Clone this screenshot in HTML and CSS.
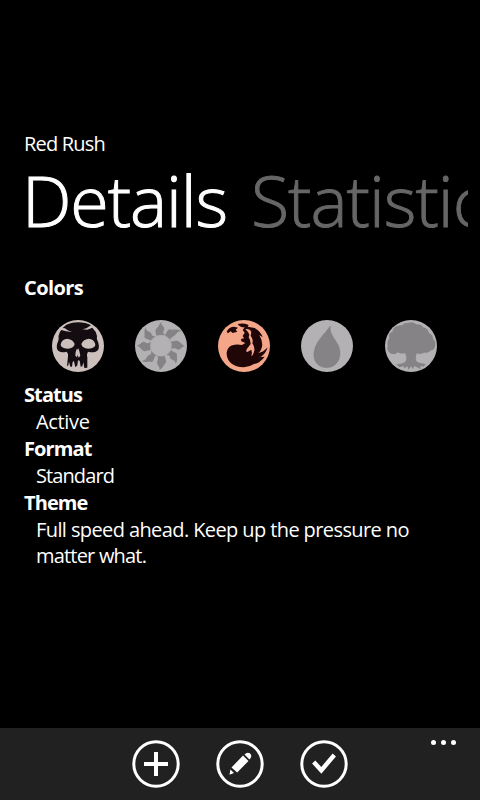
FILE: index.html
```
<!DOCTYPE html>
<html lang="en">
<head>
<meta charset="utf-8">
<title>Red Rush</title>
<link rel="stylesheet" href="styles.css">
</head>
<body>
<div class="phone">
  <header class="header">
    <div class="deck"><span class="t-deck">Red Rush</span></div>
    <nav class="pivot"><span class="tab active">Details</span><span class="tab next">Statistics</span></nav>
  </header>
  <main class="details">
    <div class="label"><span class="t-colors">Colors</span></div>
    <div class="mana">
      <svg viewBox="0 0 192 192"><circle cx="96" cy="96" r="78" fill="#ccc0bd"/>
        <path fill="#130c10" d="M61 32Q78 25 96 25Q120 25 135 34L121 43L109 46L124 47L139 41Q150 51 153 66Q150 76 157 86Q163 108 149 113Q138 116 127 113Q121 119 124 130L124 161L115 162L112 145L109 157L104 158L101 140L96 139L94 154L88 160L84 142L80 143L78 158L73 158L69 143L67 154L63 157L66 127Q67 116 61 113Q48 117 39 112Q30 108 33 91Q37 82 38 75Q36 65 42 53L46 48L60 52L78 54L65 49L57 43L50 42Z"/>
        <path fill="#ccc0bd" d="M44 91Q48 75 64 74Q82 77 86 90Q84 103 65 104Q43 103 44 91ZM148 91Q144 75 128 74Q110 77 106 90Q108 103 127 104Q149 103 148 91Z"/>
        <path fill="#ccc0bd" d="M93 103Q88 113 88 125L93 130L95 122L98 131L103 125Q101 111 97 103L95 108Z"/></svg>
      <svg viewBox="0 0 192 192"><circle cx="96" cy="96" r="78" fill="#b3b1b3"/>
        <g fill="#858385"><path d="M82 65C80 54 77 49 83 43C91 37 89 29 98 24C95 35 105 36 106 44C106 52 98 51 107 62Z"/>
        <path d="M107 63C116 56 113 47 123 46C132 49 138 43 160 51C143 51 143 61 135 66C128 71 125 70 123 79Z"/>
        <path d="M126 82C137 84 140 76 147 81C158 87 160 93 168 97C157 98 157 106 149 107C141 107 143 99 127 105Z"/>
        <path d="M126 108C134 117 143 114 144 122C142 131 148 137 140 149C139 139 132 139 126 135C119 128 128 125 112 123Z"/>
        <path d="M108 125C107 136 115 140 110 147C103 152 101 165 91 168C94 158 84 153 84 146C84 139 91 138 84 124Z"/>
        <path d="M81 124C73 133 76 142 68 144C60 141 53 147 38 141C53 138 51 131 56 126C62 119 67 126 67 110Z"/>
        <path d="M64 109C53 107 50 115 43 110C34 104 34 99 22 93C34 94 36 84 44 83C52 84 49 92 65 84Z"/>
        <path d="M64 80C57 73 48 76 46 68C49 59 43 53 50 40C51 54 60 51 66 57C71 63 64 66 79 66Z"/></g>
        <circle cx="96" cy="95" r="32" fill="#b3b1b3" stroke="#9a989a" stroke-width="1"/></svg>
      <svg viewBox="0 0 192 192"><circle cx="96" cy="96" r="78" fill="#f5a688"/>
        <path fill="#210607" d="M44 53Q51 38 67 38L78 41L71 47L76 53L62 57L56 52L48 58Z"/>
        <path fill="#210607" d="M77 30Q94 26 110 33L107 38L128 42Q147 53 152 70L142 63Q153 82 150 99Q147 111 139 117Q154 115 167 100Q162 118 147 128L136 130L158 128Q145 146 126 150Q112 159 96 160Q68 160 54 145Q43 132 44 115Q47 94 68 92Q81 91 90 93L100 87L88 82L87 75L96 73L92 66L98 56L92 48L98 40Q85 41 77 30Z"/>
        <path fill="#f5a688" d="M100 45Q114 43 118 54L116 66Q125 77 121 88Q130 101 126 113Q124 123 118 126Q121 114 118 107L106 114Q100 112 105 104L116 90L114 78L110 70L112 62L108 54Z"/></svg>
      <svg viewBox="0 0 192 192"><circle cx="96" cy="96" r="78" fill="#b3b1b3"/>
        <path fill="#858385" stroke="#777577" stroke-width="1" d="M106 36C102 57 121 77 129 92C144 122 131 160 95 161C66 161 51 136 58 109C64 80 90 59 106 36Z"/></svg>
      <svg viewBox="0 0 192 192"><circle cx="96" cy="96" r="78" fill="#b3b1b3"/>
        <path fill="#858385" stroke="#777577" stroke-width="1" d="M69 35Q76 25 87 28Q100 22 113 32Q126 30 134 41Q147 43 149 57Q161 62 161 74Q170 80 168 95Q166 107 155 109Q148 118 137 115Q124 122 113 117Q108 126 110 139Q113 146 124 148L139 151L134 157L122 156L125 164L112 158L105 155L102 164L96 155L89 166L86 156L76 162L74 155L62 159L53 152L68 149Q82 146 83 134Q83 121 76 116Q64 121 57 114Q46 124 34 117Q22 109 27 96Q23 83 32 73Q27 57 41 54Q43 37 58 37Q64 32 69 35Z"/></svg>
    </div>
    <div class="label"><span class="t-status">Status</span></div>
    <div class="value"><span class="t-active">Active</span></div>
    <div class="label"><span class="t-format">Format</span></div>
    <div class="value"><span class="t-standard">Standard</span></div>
    <div class="label"><span class="t-theme">Theme</span></div>
    <div class="value theme"><span class="t-line1">Full speed ahead. Keep up the pressure no</span><br><span class="t-line2">matter what.</span></div>
  </main>
  <footer class="appbar">
    <svg viewBox="0 0 48 48"><circle class="ring" cx="24" cy="24" r="22.2"/><path fill="#fff" d="M22 12h4v10h10v4H26v10h-4V26H12v-4h10z"/></svg>
    <svg viewBox="0 0 48 48"><circle class="ring" cx="24" cy="24" r="22.2"/><path fill="#fff" d="M27 15.5L32.5 21L21.2 32.5L15.5 27.5ZM28.5 14.5Q31 12 33.8 13.3Q36.5 15.5 34.3 18.5L33.4 19.5ZM14.4 29.5L18 33L13.5 34.8Z"/></svg>
    <svg viewBox="0 0 48 48"><circle class="ring" cx="24" cy="24" r="22.2"/><path fill="none" stroke="#fff" stroke-width="4.4" d="M13.7 22L21.3 30.3L34.3 15"/></svg>
    <div class="more"><i></i><i></i><i></i></div>
  </footer>
</div>
</body>
</html>
```
FILE: styles.css
```
* { box-sizing: border-box; }
body { margin: 0; background: #000; color: #fff; font: 20px/27px "Open Sans", sans-serif; }
.phone { width: 480px; height: 800px; display: flex; flex-direction: column; overflow: hidden; }
.header { padding: 134px 12px 0 22px; }
.deck { height: 20px; line-height: 20px; padding-left: 2px; }
.pivot { height: 92px; line-height: 92px; font-size: 70px; font-weight: 300; display: flex; gap: 24px; overflow: hidden; white-space: nowrap; letter-spacing: -1.1px; -webkit-text-stroke: 1px currentColor; }
.next { color: #666; letter-spacing: -1px; -webkit-text-stroke-width: 0.9px; }
.details { flex: 1; padding: 28px 24px 0; }
.label { font-weight: 700; height: 27px; letter-spacing: -0.9px; }
.value { padding-left: 12px; white-space: nowrap; letter-spacing: -0.6px; }
.theme { line-height: 26px; padding-top: 1px; }
.mana { display: flex; justify-content: space-between; padding: 13px 0 3px 22px; height: 80px; width: 418.6px; }
.mana svg { width: 64px; height: 64px; flex: none; }
.appbar { height: 72px; background: #212121; display: flex; justify-content: center; gap: 36px; padding-top: 12px; position: relative; }
.appbar svg { width: 48px; height: 48px; }
.ring { fill: none; stroke: #fff; stroke-width: 3; }
.more { position: absolute; right: 24px; top: 12px; display: flex; gap: 5px; }
.more i { width: 5px; height: 5px; border-radius: 50%; background: #fff; }
.t-deck { letter-spacing: -0.8px; }
.t-colors { letter-spacing: -0.6px; }
.t-active { letter-spacing: -0.35px; }
.t-standard { letter-spacing: -0.9px; }
.t-line2 { letter-spacing: -0.8px; }
```
